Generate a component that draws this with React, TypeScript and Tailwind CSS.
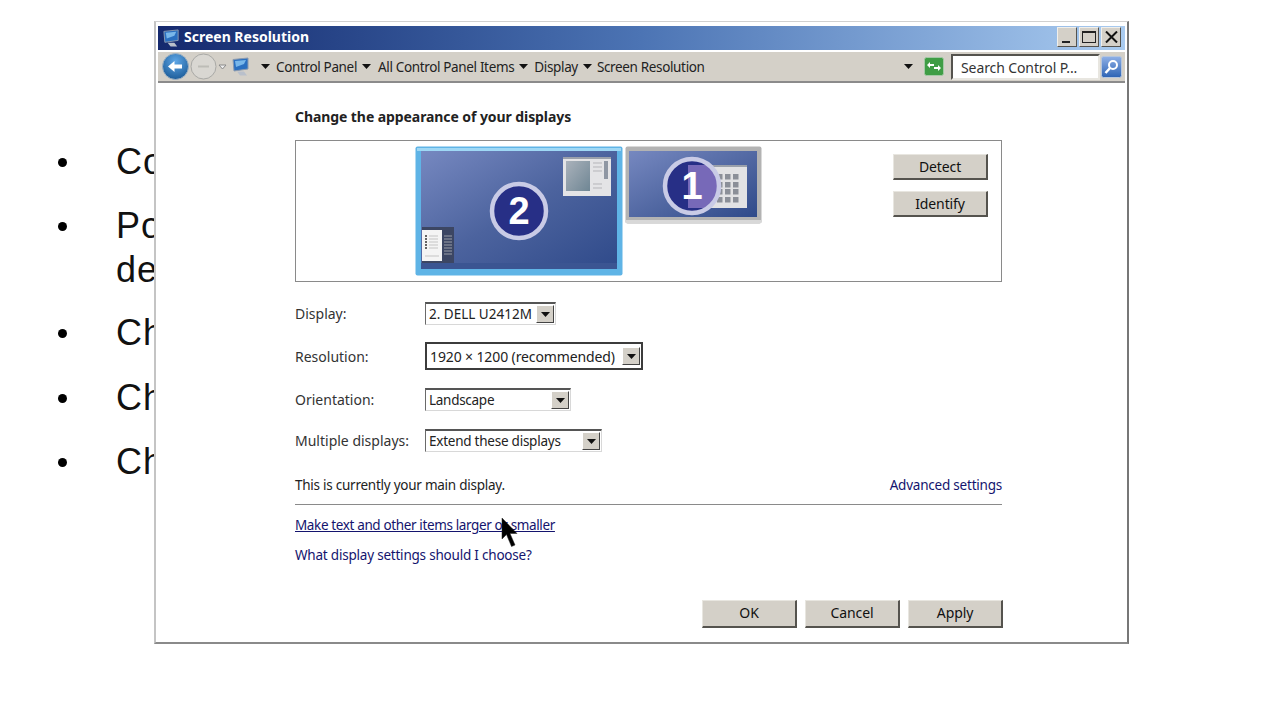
import React from "react";

const F = { fontFamily: '"Noto Sans", "DejaVu Sans", sans-serif' };

function Arrow() {
  return (
    <svg width="9" height="5" viewBox="0 0 9 5" className="shrink-0">
      <path d="M0 0h9L4.5 5z" fill="#111" />
    </svg>
  );
}

function ComputerIcon({ size = 20 }: { size?: number }) {
  return (
    <svg width={size} height={size} viewBox="0 0 20 20" className="shrink-0">
      <path d="M2 2.5 17 1v11L3 14z" fill="#2a6fc0" stroke="#8a9ab0" strokeWidth="1" />
      <path d="M4 4l11-1-2 4-8 3z" fill="#79b7ea" />
      <path d="M6 14.5h7l3 4H9z" fill="#b9c0cb" />
    </svg>
  );
}

function BevelButton({ children, className = "" }: { children: React.ReactNode; className?: string }) {
  return (
    <button className={`flex w-[95px] items-center justify-center border-t border-l border-t-[#e8e6e0] border-l-[#e8e6e0] border-r-2 border-b-2 border-r-[#55534e] border-b-[#55534e] bg-[#d4d0c8] text-[14px] tracking-[-0.1px] text-[#111] ${className}`}>
      {children}
    </button>
  );
}

function CaptionButton({ children }: { children: React.ReactNode }) {
  return (
    <div className="flex h-[20px] w-[20px] items-center justify-center border-t border-l border-t-[#f0efeb] border-l-[#f0efeb] border-r border-b border-r-[#55534e] border-b-[#55534e] bg-[#d4d0c8]">
      {children}
    </div>
  );
}

function Combo({ value, width, text, focus = false }: { value: string; width: string; text: string; focus?: boolean }) {
  return (
    <div className={`flex items-center bg-white ${width} ${focus ? "h-[28px] border-2 border-[#3c3c3c] pl-[3px] pr-[1px]" : "h-[23px] border border-t-2 border-l-[#6a6a6a] border-t-[#555] border-r-[#d8d8d8] border-b-[#d8d8d8] pl-[3px] pr-[1px]"}`}>
      <span className={`flex-1 whitespace-nowrap pt-[2px] leading-none text-[#222] ${text}`}>{value}</span>
      <div className="flex h-[18px] w-[18px] shrink-0 items-center justify-center border-t border-l border-t-white border-l-white border-r border-b border-r-[#444] border-b-[#444] bg-[#d4d0c8]">
        <Arrow />
      </div>
    </div>
  );
}

function Row({ label, className, children }: { label: string; className: string; children: React.ReactNode }) {
  return (
    <div className={`flex items-center ${className}`}>
      <span className="w-[130px] text-[14px] text-[#333]">{label}</span>
      {children}
    </div>
  );
}

function Monitor2() {
  return (
    <svg width="208" height="130" viewBox="0 0 208 130" className="shrink-0">
      <defs>
        <linearGradient id="m2" x1="0" y1="0" x2="1" y2="1">
          <stop offset="0" stopColor="#7688c0" />
          <stop offset="0.5" stopColor="#4c639e" />
          <stop offset="1" stopColor="#2f4a8a" />
        </linearGradient>
        <linearGradient id="pane" x1="0" y1="0" x2="1" y2="1">
          <stop offset="0" stopColor="#aab2bb" />
          <stop offset="1" stopColor="#6f8694" />
        </linearGradient>
      </defs>
      <rect x="0.5" y="0.5" width="207" height="129" rx="2" fill="#5fb4e6" />
      <rect x="2" y="2" width="204" height="3" fill="#9fd8f5" />
      <rect x="6" y="5" width="196" height="118" fill="url(#m2)" />
      <rect x="6" y="117" width="196" height="6" fill="#3b5592" />
      <rect x="148" y="11" width="48" height="39" fill="#e4e4e6" />
      <rect x="148" y="11" width="48" height="2" fill="#9aa0ab" />
      <rect x="151" y="15" width="24" height="30" fill="url(#pane)" />
      <path d="M178 17h9M178 21h9M178 25h9M178 38h9M178 42h9" stroke="#b5b5b9" strokeWidth="1" />
      <rect x="189" y="15" width="4" height="18" fill="#8f97a3" />
      <rect x="7" y="81" width="32" height="36" fill="#3c4663" />
      <rect x="7" y="84" width="20" height="31" fill="#f4f4f4" />
      <path d="M10 90h2M10 93h2M10 96h2M10 99h2M10 102h2" stroke="#333" strokeWidth="1.4" />
      <path d="M14 90h9M14 93h9M14 96h9M14 99h9M14 102h9M10 110h14" stroke="#c4c4c4" strokeWidth="1" />
      <path d="M29 90h8M29 93h8M29 96h8M29 99h8M29 102h8M29 105h8M29 108h8" stroke="#9a9ea8" strokeWidth="1" />
      <circle cx="104" cy="65" r="27" fill="#272f86" stroke="#c9cbe6" strokeWidth="4.5" />
      <text x="104" y="78" textAnchor="middle" fontSize="38" fontWeight="700" fill="#fff" style={{ fontFamily: '"Liberation Sans", sans-serif' }}>2</text>
    </svg>
  );
}

function Monitor1() {
  const cells: React.ReactNode[] = [];
  const xs = [84, 92, 100, 108];
  const ys = [28, 36, 43, 51];
  ys.forEach((y, r) =>
    xs.forEach((x, c) =>
      cells.push(<rect key={`${r}-${c}`} x={x} y={y} width="5.5" height="5.5" fill="#8b8f98" />)
    )
  );
  return (
    <svg width="137" height="78" viewBox="0 0 137 78" className="shrink-0 -ml-[1px]">
      <defs>
        <linearGradient id="m1" x1="0" y1="0" x2="1" y2="1">
          <stop offset="0" stopColor="#7688c0" />
          <stop offset="0.6" stopColor="#4c639e" />
          <stop offset="1" stopColor="#2f4a8a" />
        </linearGradient>
        <clipPath id="disc">
          <circle cx="67" cy="40" r="27" />
        </clipPath>
      </defs>
      <rect x="0.5" y="0.5" width="136" height="77" rx="2" fill="#b3b3b3" />
      <rect x="0.5" y="74" width="136" height="3" fill="#d8d8d8" />
      <rect x="4" y="5" width="128" height="66" fill="url(#m1)" />
      <rect x="63" y="19" width="59" height="43" fill="#e2e2e4" />
      <rect x="63" y="19" width="59" height="2" fill="#9aa0ab" />
      {cells}
      <circle cx="67" cy="40" r="27" fill="#272f86" />
      <rect x="63" y="19" width="40" height="43" fill="#7769b8" clipPath="url(#disc)" />
      <circle cx="67" cy="40" r="27" fill="none" stroke="#c9cbe6" strokeWidth="4.5" />
      <text x="67" y="53" textAnchor="middle" fontSize="38" fontWeight="700" fill="#fff" style={{ fontFamily: '"Liberation Sans", sans-serif' }}>1</text>
    </svg>
  );
}

export default function App() {
  const bullets = [
    { t: "Co", mt: "mt-[140px]" },
    { t: "Po\nde", mt: "mt-[20px]" },
    { t: "Ch", mt: "mt-[19px]" },
    { t: "Ch", mt: "mt-[21px]" },
    { t: "Ch", mt: "mt-[20px]" },
  ];
  return (
    <div className="relative h-[720px] w-[1280px] overflow-hidden bg-white" style={F}>
      <div className="pl-[58px]">
        {bullets.map((b, i) => (
          <div key={i} className={`flex ${b.mt}`}>
            <div className="mt-[18px] h-[9px] w-[9px] shrink-0 rounded-full bg-black" />
            <div className="ml-[49px] whitespace-pre text-[36px] leading-[44px] tracking-[1px] text-[#111]" style={{ fontFamily: '"Liberation Sans", sans-serif' }}>{b.t}</div>
          </div>
        ))}
      </div>

      <div className="absolute left-[154px] top-[21px] flex h-[623px] w-[975px] flex-col border-t border-l-2 border-r-2 border-b-2 border-t-[#d0d0d0] border-l-[#c4c4c4] border-r-[#777] border-b-[#8a8a8a] bg-white p-[2px] pt-[4px]">
        <div className="flex h-[24px] items-center bg-gradient-to-r from-[#15296e] via-[#4c74b4] to-[#a9cbf0] pl-[4px] pr-[4px]">
          <ComputerIcon size={19} />
          <span className="ml-[3px] flex-1 pb-[4px] text-[14px] font-bold text-white">Screen Resolution</span>
          <div className="-mt-[2px] flex gap-[2px]">
            <CaptionButton>
              <div className="mt-[10px] -ml-[3px] h-[2px] w-[8px] bg-[#222]" />
            </CaptionButton>
            <CaptionButton>
              <div className="h-[12px] w-[14px] border border-t-2 border-[#222]" />
            </CaptionButton>
            <CaptionButton>
              <svg width="13" height="12" viewBox="0 0 13 12"><path d="M1 0.500 12 11.500M12 0.500 1 11.500" stroke="#111" strokeWidth="2" /></svg>
            </CaptionButton>
          </div>
        </div>

        <div className="mt-[2px] flex h-[31px] items-center border-b-2 border-b-[#8b8b8b] bg-[#d4d0c8] pl-[4px] pr-[3px] text-[14px] text-[#222]">
          <svg width="27" height="27" viewBox="0 0 27 27" className="shrink-0">
            <defs>
              <radialGradient id="back" cx="0.5" cy="0.3" r="0.8">
                <stop offset="0" stopColor="#5ea6e6" />
                <stop offset="1" stopColor="#14538f" />
              </radialGradient>
            </defs>
            <circle cx="13.500" cy="13.500" r="13" fill="url(#back)" stroke="#9eb1c2" />
            <path d="M6 13.500 12.500 8v3.500H20v4h-7.500V19z" fill="#fff" />
          </svg>
          <svg width="27" height="27" viewBox="0 0 27 27" className="ml-[1px] shrink-0">
            <circle cx="13.500" cy="13.500" r="12.500" fill="#d9d7d2" stroke="#a9a9a6" />
            <path d="M8 12.500h11v2H8z" fill="#bdbcb7" />
          </svg>
          <svg width="9" height="6" viewBox="0 0 9 6" className="ml-[1px] shrink-0"><path d="M1 1h7L4.500 5z" fill="#eee" stroke="#8a8a8a" /></svg>
          <div className="ml-[4px]"><ComputerIcon size={20} /></div>
          <div className="ml-[10px] flex items-center whitespace-nowrap text-[13.5px] tracking-[-0.35px]">
            <Arrow />
            <span className="ml-[6px] pt-[2px]">Control Panel</span>
            <span className="ml-[5px]"><Arrow /></span>
            <span className="ml-[7px] pt-[2px]">All Control Panel Items</span>
            <span className="ml-[5px]"><Arrow /></span>
            <span className="ml-[6px] pt-[2px]">Display</span>
            <span className="ml-[5px]"><Arrow /></span>
            <span className="ml-[5px] pt-[2px]">Screen Resolution</span>
          </div>
          <div className="ml-auto"><Arrow /></div>
          <svg width="20" height="19" viewBox="0 0 20 19" className="ml-[11px] shrink-0">
            <rect x="0.500" y="0.500" width="19" height="18" rx="2" fill="#3f9d45" stroke="#a4c9a6" />
            <path d="M3 8l3-3v2h4v2H6v2zM17 11l-3 3v-2h-4v-2h4V8z" fill="#fff" />
          </svg>
          <div className="ml-[7px] flex h-[26px] w-[149px] items-center border-2 border-t-[#55534e] border-l-[#55534e] border-r-[#e8e6e0] border-b-[#e8e6e0] bg-white pl-[8px] pt-[2px] text-[14px] tracking-[-0.1px] text-[#333]">
            Search Control P...
          </div>
          <svg width="21" height="22" viewBox="0 0 21 22" className="ml-[1px] shrink-0">
            <defs>
              <linearGradient id="s" x1="0" y1="0" x2="0" y2="1">
                <stop offset="0" stopColor="#8fb0e6" />
                <stop offset="1" stopColor="#2c63b4" />
              </linearGradient>
            </defs>
            <rect x="0.500" y="0.500" width="20" height="21" rx="2" fill="url(#s)" stroke="#b5c6de" />
            <circle cx="12" cy="9" r="4" fill="none" stroke="#fff" strokeWidth="2" />
            <path d="M9 12 4.500 17" stroke="#fff" strokeWidth="2.500" />
          </svg>
        </div>

        <div className="ml-[137px] flex w-[707px] flex-1 flex-col">
          <div className="mt-[24px] text-[14px] font-bold leading-[20px] tracking-[-0.08px] text-[#222]">Change the appearance of your displays</div>
          <div className="mt-[13px] flex h-[142px] items-start border border-[#8a8a8a] pl-[119px] pr-[13px] pt-[5px]">
            <Monitor2 />
            <div className="ml-[3px]"><Monitor1 /></div>
            <div className="ml-auto mt-[8px] flex flex-col gap-[11px]">
              <BevelButton className="h-[26px] pb-[1px]">Detect</BevelButton>
              <BevelButton className="h-[26px] pb-[1px]">Identify</BevelButton>
            </div>
          </div>

          <Row label="Display:" className="mt-[20px]"><Combo value="2. DELL U2412M" width="w-[131px]" text="text-[13.5px]" /></Row>
          <Row label="Resolution:" className="mt-[17px]"><Combo value="1920 × 1200 (recommended)" width="w-[218px]" text="text-[14px] tracking-[-0.12px]" focus /></Row>
          <Row label="Orientation:" className="mt-[18px]"><Combo value="Landscape" width="w-[146px]" text="text-[13.5px] tracking-[-0.28px]" /></Row>
          <Row label="Multiple displays:" className="mt-[18px]"><Combo value="Extend these displays" width="w-[177px]" text="text-[13.5px] tracking-[-0.24px]" /></Row>

          <div className="mt-[23px] flex items-center justify-between text-[13.5px] leading-[20px]">
            <span className="tracking-[-0.25px] text-[#222]">This is currently your main display.</span>
            <span className="tracking-[-0.22px] text-[#14146e]">Advanced settings</span>
          </div>
          <div className="mt-[9px] h-[1px] w-full bg-[#8a8a8a]" />
          <div className="mt-[10px] text-[13.5px] leading-[20px] tracking-[-0.37px] text-[#14146e] underline">Make text and other items larger or smaller</div>
          <div className="mt-[10px] text-[13.5px] leading-[20px] tracking-[-0.21px] text-[#14146e]">What display settings should I choose?</div>

          <div className="-mr-[1px] mt-[35px] flex justify-end gap-[8px]">
            <BevelButton className="h-[28px] pb-[3px]">OK</BevelButton>
            <BevelButton className="h-[28px] pb-[3px]">Cancel</BevelButton>
            <BevelButton className="h-[28px] pb-[3px]">Apply</BevelButton>
          </div>
        </div>
      </div>

      <svg width="20" height="30" viewBox="0 0 20 30" className="absolute left-[500px] top-[518px]">
        <path d="M2 0v21l4.500-4.500 5 12 3.500-1.500-5-11.500 7 0z" fill="#000" stroke="#222" strokeWidth="0.500" />
      </svg>
    </div>
  );
}
